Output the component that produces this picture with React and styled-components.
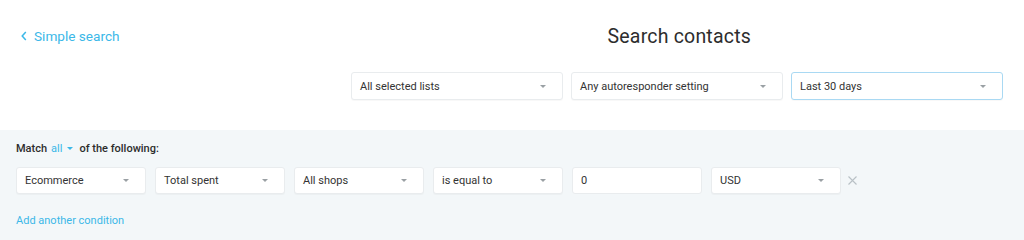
import styled, { createGlobalStyle } from "styled-components";

const GlobalStyle = createGlobalStyle`
    body {
        margin: 0;
        font-family: Roboto, "Liberation Sans", sans-serif;
        background: #ffffff;
    }
`

const Caret = () => (
    <svg width="6" height="3" viewBox="0 0 6 3">
        <path d="M0 0 L6 0 L3 3 Z" fill="currentColor" />
    </svg>
)

const Select = ({ label, width, height, active }) => (
    <SelectBox width={width} height={height} active={active}>
        <span>{label}</span>
        <CaretWrap>
            <Caret />
        </CaretWrap>
    </SelectBox>
)

const App = () => {
    const conditions = ["Ecommerce", "Total spent", "All shops", "is equal to"]

    return (
        <Page>
            <GlobalStyle />
            <Top>
                <HeaderRow>
                    <BackLink>
                        <svg width="6" height="10" viewBox="0 0 6 10">
                            <path d="M4.8 1 L1.2 5 L4.8 9" stroke="currentColor" strokeWidth="1.5" fill="none" />
                        </svg>
                        Simple search
                    </BackLink>
                    <Title>Search contacts</Title>
                </HeaderRow>
                <FilterRow>
                    <Select label="All selected lists" width={212} height={28} />
                    <Select label="Any autoresponder setting" width={212} height={28} />
                    <Select label="Last 30 days" width={212} height={28} active />
                </FilterRow>
            </Top>
            <Bottom>
                <MatchLine>
                    Match <MatchAll>all <Caret /></MatchAll> of the following:
                </MatchLine>
                <ConditionRow>
                    {conditions.map((c) => (
                        <Select key={c} label={c} width={130} height={27} />
                    ))}
                    <ValueInput>0</ValueInput>
                    <Select label="USD" width={130} height={27} />
                    <RemoveButton>
                        <svg width="9" height="9" viewBox="0 0 9 9">
                            <path d="M0.5 0.5 L8.5 8.5 M8.5 0.5 L0.5 8.5" stroke="currentColor" strokeWidth="1.1" />
                        </svg>
                    </RemoveButton>
                </ConditionRow>
                <AddLink>Add another condition</AddLink>
            </Bottom>
        </Page>
    );
}

export default App;


const Page = styled.div`
    width: 1024px;
    height: 240px;
    overflow: hidden;
`

const Top = styled.div`
    height: 130px;
    background: #ffffff;
    display: flex;
    flex-direction: column;
`

const HeaderRow = styled.div`
    display: flex;
    align-items: center;
    height: 72px;
`

const BackLink = styled.a`
    display: flex;
    align-items: center;
    gap: 7px;
    margin-left: 21px;
    color: #3bb8e8;
    font-size: 13.6px;
    cursor: pointer;
`

const Title = styled.h1`
    margin: 0 0 0 488px;
    font-size: 19.5px;
    font-weight: 400;
    color: #2d2d2d;
    letter-spacing: 0.2px;
`

const FilterRow = styled.div`
    display: flex;
    gap: 8px;
    padding-left: 351px;
`

const SelectBox = styled.div`
    box-sizing: border-box;
    width: ${(p) => p.width}px;
    height: ${(p) => p.height}px;
    display: flex;
    align-items: center;
    justify-content: space-between;
    padding: 0 16px 0 8px;
    background: #ffffff;
    border: 1px solid ${(p) => (p.active ? "#a9d9f3" : "#e9ecee")};
    border-radius: 3px;
    box-shadow: 0 1px 1px rgba(0, 0, 0, 0.03);
    font-size: 11px;
    color: #333333;
`

const CaretWrap = styled.span`
    display: flex;
    color: #9aa0a4;
`

const Bottom = styled.div`
    height: 110px;
    background: #f3f7f9;
    padding: 10px 16px 0;
    box-sizing: border-box;
`

const MatchLine = styled.div`
    font-size: 11px;
    font-weight: 500;
    color: #2d2d2d;
    height: 16px;
    display: flex;
    align-items: center;
    gap: 4px;
`

const MatchAll = styled.span`
    display: inline-flex;
    align-items: center;
    gap: 5px;
    color: #3bb8e8;
    font-weight: 400;
    margin-right: 2px;
`

const ConditionRow = styled.div`
    display: flex;
    align-items: center;
    gap: 9px;
    margin-top: 11px;
`

const ValueInput = styled.div`
    box-sizing: border-box;
    width: 130px;
    height: 27px;
    display: flex;
    align-items: center;
    padding-left: 8px;
    background: #ffffff;
    border: 1px solid #e9ecee;
    border-radius: 3px;
    font-size: 11px;
    color: #333333;
`

const RemoveButton = styled.span`
    display: flex;
    color: #b9c1c6;
    margin-left: -2px;
`

const AddLink = styled.a`
    display: block;
    margin-top: 20px;
    font-size: 11px;
    color: #3bb8e8;
    cursor: pointer;
`
